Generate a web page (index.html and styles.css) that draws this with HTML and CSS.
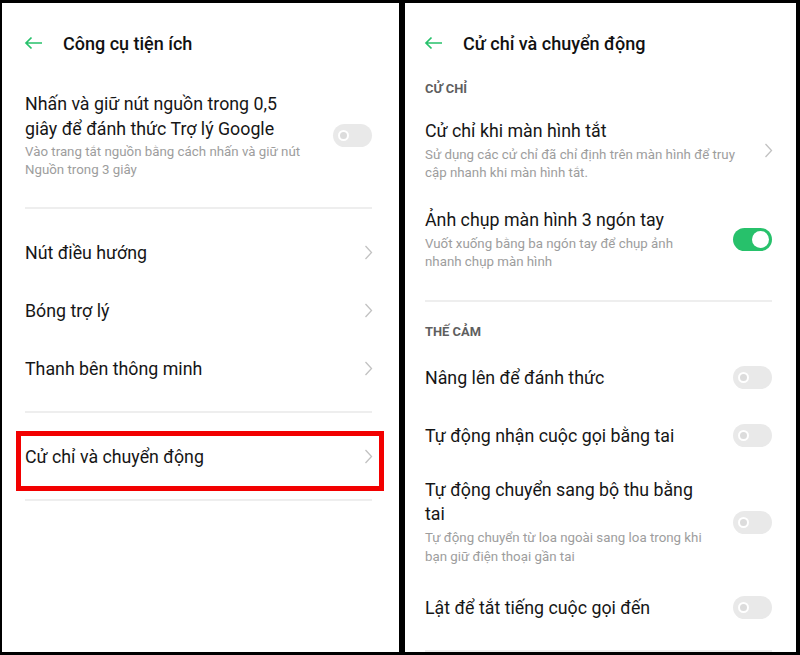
FILE: index.html
```html
<!DOCTYPE html>
<html lang="vi">
<head>
    <meta charset="UTF-8">
    <meta name="viewport" content="width=device-width, initial-scale=1.0">
    <title>Cử chỉ và chuyển động</title>
    <link rel="stylesheet" href="styles.css">
</head>
<body>
    <div class="screens">
        <!-- Màn hình 1 -->
        <div class="phone phone-left">
            <div class="header">
                <svg class="back" width="19" height="14" viewBox="0 0 19 14"><path d="M18 7H2M7.5 1.5L2 7l5.5 5.5" fill="none" stroke="#27c16b" stroke-width="1.7"/></svg>
                <span class="header-title">Công cụ tiện ích</span>
            </div>

            <div class="item item-first">
                <div class="text">
                    <div class="title">Nhấn và giữ nút nguồn trong 0,5 giây để đánh thức Trợ lý Google</div>
                    <div class="sub">Vào trang tắt nguồn bằng cách nhấn và giữ nút Nguồn trong 3 giây</div>
                </div>
                <span class="switch"></span>
            </div>
            <div class="divider"></div>

            <div class="row first-row">
                <span class="title">Nút điều hướng</span>
                <svg class="chevron" width="9" height="15" viewBox="0 0 9 15"><path d="M1.5 1l6 6.5-6 6.5" fill="none" stroke="#c2c2c2" stroke-width="1.3"/></svg>
            </div>
            <div class="row">
                <span class="title">Bóng trợ lý</span>
                <svg class="chevron" width="9" height="15" viewBox="0 0 9 15"><path d="M1.5 1l6 6.5-6 6.5" fill="none" stroke="#c2c2c2" stroke-width="1.3"/></svg>
            </div>
            <div class="row">
                <span class="title">Thanh bên thông minh</span>
                <svg class="chevron" width="9" height="15" viewBox="0 0 9 15"><path d="M1.5 1l6 6.5-6 6.5" fill="none" stroke="#c2c2c2" stroke-width="1.3"/></svg>
            </div>
            <div class="divider gap-top"></div>

            <div class="row first-row marked">
                <span class="title">Cử chỉ và chuyển động</span>
                <svg class="chevron" width="9" height="15" viewBox="0 0 9 15"><path d="M1.5 1l6 6.5-6 6.5" fill="none" stroke="#c2c2c2" stroke-width="1.3"/></svg>
                <span class="red-box"></span>
            </div>
            <div class="divider gap-top"></div>
        </div>

        <!-- Màn hình 2 -->
        <div class="phone phone-right">
            <div class="header">
                <svg class="back" width="19" height="14" viewBox="0 0 19 14"><path d="M18 7H2M7.5 1.5L2 7l5.5 5.5" fill="none" stroke="#27c16b" stroke-width="1.7"/></svg>
                <span class="header-title">Cử chỉ và chuyển động</span>
            </div>

            <div class="section-label label-1">CỬ CHỈ</div>
            <div class="item item-a">
                <div class="text">
                    <div class="title">Cử chỉ khi màn hình tắt</div>
                    <div class="sub">Sử dụng các cử chỉ đã chỉ định trên màn hình để truy cập nhanh khi màn hình tắt.</div>
                </div>
                <svg class="chevron" width="9" height="15" viewBox="0 0 9 15"><path d="M1.5 1l6 6.5-6 6.5" fill="none" stroke="#c2c2c2" stroke-width="1.3"/></svg>
            </div>
            <div class="item item-b">
                <div class="text">
                    <div class="title">Ảnh chụp màn hình 3 ngón tay</div>
                    <div class="sub">Vuốt xuống bằng ba ngón tay để chụp ảnh nhanh chụp màn hình</div>
                </div>
                <span class="switch on"></span>
            </div>
            <div class="divider"></div>

            <div class="section-label label-2">THẾ CẢM</div>
            <div class="row row-tight">
                <span class="title">Nâng lên để đánh thức</span>
                <span class="switch"></span>
            </div>
            <div class="row">
                <span class="title">Tự động nhận cuộc gọi bằng tai</span>
                <span class="switch"></span>
            </div>
            <div class="item item-c">
                <div class="text">
                    <div class="title">Tự động chuyển sang bộ thu bằng tai</div>
                    <div class="sub">Tự động chuyển từ loa ngoài sang loa trong khi bạn giữ điện thoại gần tai</div>
                </div>
                <span class="switch"></span>
            </div>
            <div class="row">
                <span class="title">Lật để tắt tiếng cuộc gọi đến</span>
                <span class="switch"></span>
            </div>
            <div class="divider gap-top"></div>
        </div>
    </div>
</body>
</html>
```

FILE: styles.css
```css
body {
    margin: 0;
    background: #000;
    font-family: Roboto, "Noto Sans", sans-serif;
    color: #161616;
}
.screens {
    display: flex;
    gap: 6px;
    height: 655px;
    padding: 3px 4px 3px 2px;
    box-sizing: border-box;
}
.phone {
    background: #fff;
    overflow: hidden;
    display: flex;
    flex-direction: column;
}
.phone-left {
    width: 397px;
    padding: 0 27px 0 23px;
    box-sizing: border-box;
}
.phone-right {
    width: 391px;
    padding: 0 24px 0 20px;
    box-sizing: border-box;
}
.header {
    display: flex;
    align-items: center;
    height: 24px;
    margin-top: 28px;
}
.back {
    margin-left: -1px;
    margin-right: 20px;
}
.header-title {
    font-size: 18px;
    font-weight: 500;
    color: #111;
}
.title {
    font-size: 17.8px;
    line-height: 25px;
}
.sub {
    font-size: 13.3px;
    line-height: 18px;
    color: #9d9d9d;
    margin-top: 2px;
}
.item {
    display: flex;
    align-items: center;
    justify-content: space-between;
}
.item .text {
    flex: 1;
    padding-right: 20px;
}
.phone-left .item .text {
    padding-right: 22px;
}
.item-first {
    padding: 36px 0 28px;
}
.row {
    display: flex;
    align-items: center;
    justify-content: space-between;
    height: 58px;
    flex-shrink: 0;
}
.first-row {
    margin-top: 14px;
}
.divider {
    height: 2px;
    background: #eeeeee;
    flex-shrink: 0;
}
.gap-top {
    margin-top: 14px;
}
.chevron {
    margin-right: -1px;
}
.marked {
    position: relative;
}
.red-box {
    position: absolute;
    left: -9px;
    right: -12px;
    top: 4px;
    bottom: -6px;
    border: 5px solid #f20000;
}
.section-label {
    font-size: 12.9px;
    line-height: 18px;
    font-weight: 700;
    color: #5f5f5f;
}
.label-1 {
    margin-top: 25px;
}
.label-2 {
    margin-top: 21px;
}
.item-a {
    padding: 20px 0 12px;
}
.item-a .sub,
.item-b .sub {
    margin-top: 3px;
}
.item-b {
    padding: 13px 0 29px;
}
.item-b .text {
    padding-right: 38px;
}
.item-c {
    padding: 14px 0 12px;
}
.item-c .title {
    line-height: 24px;
}
.item-c .sub {
    line-height: 19px;
}
.row-tight {
    margin-top: 7px;
}
.switch {
    position: relative;
    width: 39px;
    height: 23px;
    border-radius: 12px;
    background: #e9e9e9;
    flex-shrink: 0;
}
.switch::after {
    content: "";
    position: absolute;
    left: 5px;
    top: 6px;
    width: 7px;
    height: 7px;
    border-radius: 50%;
    border: 2.5px solid #fff;
    background: #dcdcdc;
}
.switch.on {
    background: #27c16b;
}
.switch.on::after {
    left: auto;
    right: 3px;
    top: 3px;
    width: 17px;
    height: 17px;
    border: none;
    background: #fff;
}
```
